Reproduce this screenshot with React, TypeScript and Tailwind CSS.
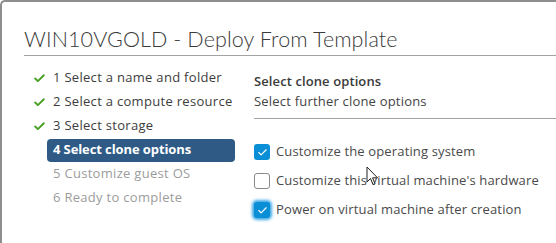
import { Check } from "lucide-react";

const steps = [
  { label: "1 Select a name and folder", state: "done" },
  { label: "2 Select a compute resource", state: "done" },
  { label: "3 Select storage", state: "done" },
  { label: "4 Select clone options", state: "active" },
  { label: "5 Customize guest OS", state: "todo" },
  { label: "6 Ready to complete", state: "todo" },
];

const options = [
  { label: "Customize the operating system", checked: true, focus: false },
  { label: "Customize this virtual machine's hardware", checked: false, focus: false },
  { label: "Power on virtual machine after creation", checked: true, focus: true },
];

function CheckBox({ checked, focus }: { checked: boolean; focus: boolean }) {
  if (!checked) {
    return <span className="w-[16px] h-[16px] rounded-[3px] border border-[#8a8a8a] bg-white shrink-0" />;
  }
  return (
    <span
      className={
        "w-[16px] h-[16px] rounded-[3px] bg-[#0a8fd6] shrink-0 flex items-center justify-center " +
        (focus ? "shadow-[0_0_3px_2px_rgba(0,140,220,0.75)]" : "")
      }
    >
      <Check className="w-[11px] h-[11px] text-white" strokeWidth={2.5} />
    </span>
  );
}

export default function App() {
  return (
    <div className="relative w-[556px] h-[243px] overflow-hidden bg-white border-l-2 border-t-2 border-[#8e8e8e] rounded-tl-[5px] font-['Open_Sans',sans-serif] text-[#333]">
      {/* Заголовок */}
      <div className="ml-[22px] pt-[24px] h-[54px] border-b border-[#a3a3a3]">
        <h1 className="font-['Lato',sans-serif] text-[21.5px] leading-[26px] font-light text-[#3a3a3a] tracking-[0.1px]">
          WIN10VGOLD - Deploy From Template
        </h1>
      </div>

      <div className="flex">
        {/* Шаги */}
        <nav className="w-[252px] pt-[10px] pl-[29px]">
          {steps.map(s => (
            <div key={s.label} className="h-[24px] flex items-center">
              <span className="w-[16px] flex justify-center">
                {s.state === "done" && <Check className="w-[13px] h-[13px] text-[#45a01f]" strokeWidth={3.4} />}
              </span>
              <span
                className={
                  "h-[23px] flex items-center px-[6px] rounded-[4px] text-[13px] " +
                  (s.state === "active"
                    ? "w-[188px] bg-[#2e5a85] text-white font-bold tracking-[-0.1px]"
                    : s.state === "done"
                    ? "text-[#3d3d3d] font-medium tracking-[0.3px]"
                    : "text-[#9c9c9c] font-medium tracking-[0.3px]")
                }
              >
                {s.label}
              </span>
            </div>
          ))}
        </nav>

        {/* Параметры клонирования */}
        <section className="flex-1 pt-[15px]">
          <div className="pb-[7px] border-b border-[#a3a3a3]">
            <h2 className="text-[13px] leading-[20px] font-semibold text-[#3a3a3a] tracking-[0.1px]">Select clone options</h2>
            <p className="text-[13px] leading-[20px] text-[#444] tracking-[0.2px]">Select further clone options</p>
          </div>
          <div className="pt-[25px] flex flex-col gap-[13px]">
            {options.map(o => (
              <label key={o.label} className="flex items-center gap-[6px] h-[16px]">
                <CheckBox checked={o.checked} focus={o.focus} />
                <span className="text-[13px] text-[#4a4a4a] tracking-[0.15px]">{o.label}</span>
              </label>
            ))}
          </div>
        </section>
      </div>

      {/* курсор мыши */}
      <svg className="absolute left-[364px] top-[164px]" width="14" height="21" viewBox="0 0 14 21">
        <path d="M1 1 L1 16 L4.5 12.5 L7 18.5 L9 17.7 L6.6 11.8 L11.5 11.8 Z" fill="white" stroke="#222" strokeWidth="1" strokeLinejoin="round" />
      </svg>
    </div>
  );
}
